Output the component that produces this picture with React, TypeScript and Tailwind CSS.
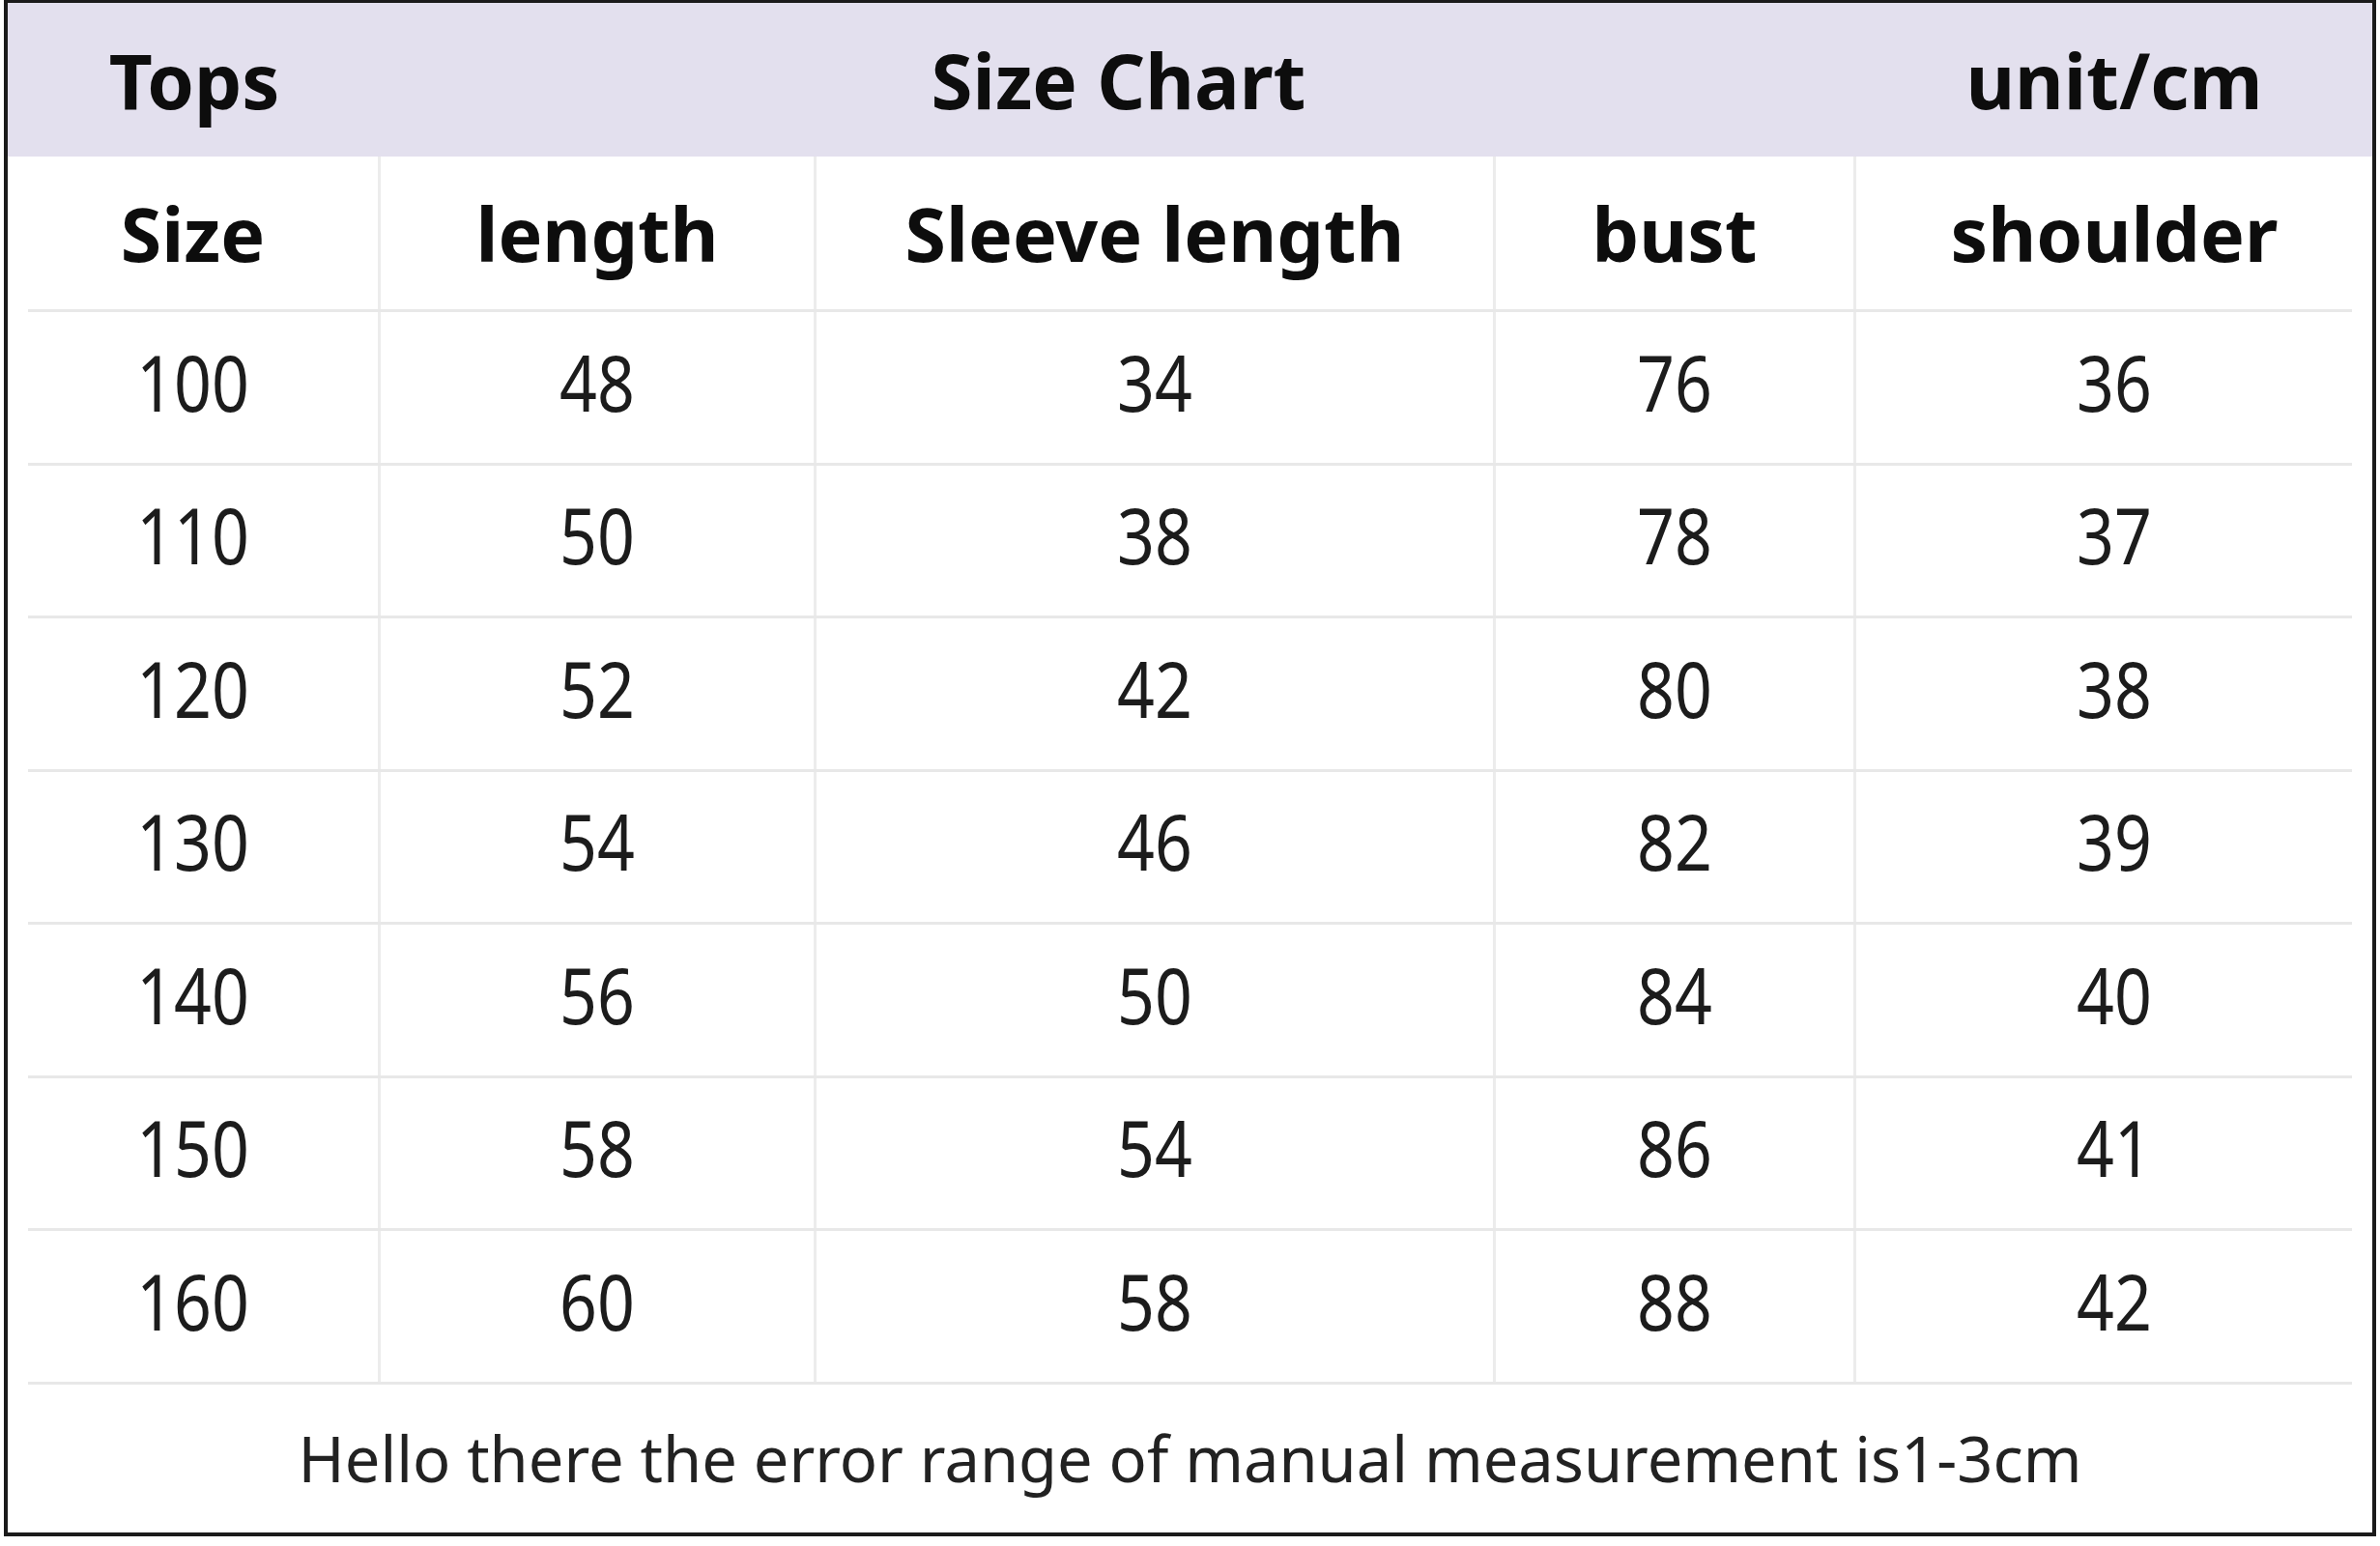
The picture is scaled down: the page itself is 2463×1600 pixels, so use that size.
import { type FC } from 'react'

// widths follow the reference grid, last column takes the rest
const colWidths = ['w-[386px]', 'w-[451px]', 'w-[703px]', 'w-[373px]', 'flex-1']

const headers = ['Size', 'length', 'Sleeve length', 'bust', 'shoulder']

const rows: string[][] = [
  ['100', '48', '34', '76', '36'],
  ['110', '50', '38', '78', '37'],
  ['120', '52', '42', '80', '38'],
  ['130', '54', '46', '82', '39'],
  ['140', '56', '50', '84', '40'],
  ['150', '58', '54', '86', '41'],
  ['160', '60', '58', '88', '42'],
]

const Divider: FC = () => <div className="mx-[21px] h-[3px] bg-[#e8e8e8]" />

const Row: FC<{ cells: string[]; head?: boolean }> = ({ cells, head }) => (
  <div className={head ? 'flex h-[158px]' : 'flex h-[155.5px]'}>
    {cells.map((c, i) => (
      <div
        key={i}
        className={`${colWidths[i]} flex items-center justify-center ${
          i < cells.length - 1 ? 'border-r-[3px] border-[#ececec]' : ''
        }`}
      >
        {head ? (
          <span className="font-['Noto_Sans',sans-serif] text-[77px] font-bold leading-none text-[#0d0d0d]">
            {c}
          </span>
        ) : (
          // the chart's digits are narrower than Noto's, so stretch them a bit
          <span className="mb-[12px] inline-block scale-y-[1.18] font-['Noto_Sans',sans-serif] text-[68px] leading-none text-[#1c1c1c]">
            {c}
          </span>
        )}
      </div>
    ))}
  </div>
)

const App: FC = () => {
  return (
    <div className="min-h-screen bg-white">
      <div className="ml-[4px] flex h-[1590px] w-[2455px] flex-col border-[4px] border-t-[3px] border-[#1b1b1b] bg-white">
        <div className="flex h-[159px] items-center bg-[#e3e0ee] font-['Noto_Sans',sans-serif] text-[78px] font-bold leading-none text-[#0d0d0d]">
          <div className="flex w-[386px] justify-center">Tops</div>
          <div className="flex w-[1527px] justify-center">Size Chart</div>
          <div className="flex flex-1 justify-center">unit/cm</div>
        </div>

        <Row cells={headers} head />
        <Divider />
        {rows.map((r) => (
          <div key={r[0]}>
            <Row cells={r} />
            <Divider />
          </div>
        ))}

        <div className="flex flex-1 items-center justify-center">
          <span className="font-['Noto_Sans',sans-serif] text-[65px] leading-none text-[#222]">
            Hello there the error range of manual measurement is1-3cm
          </span>
        </div>
      </div>
    </div>
  )
}

export default App
